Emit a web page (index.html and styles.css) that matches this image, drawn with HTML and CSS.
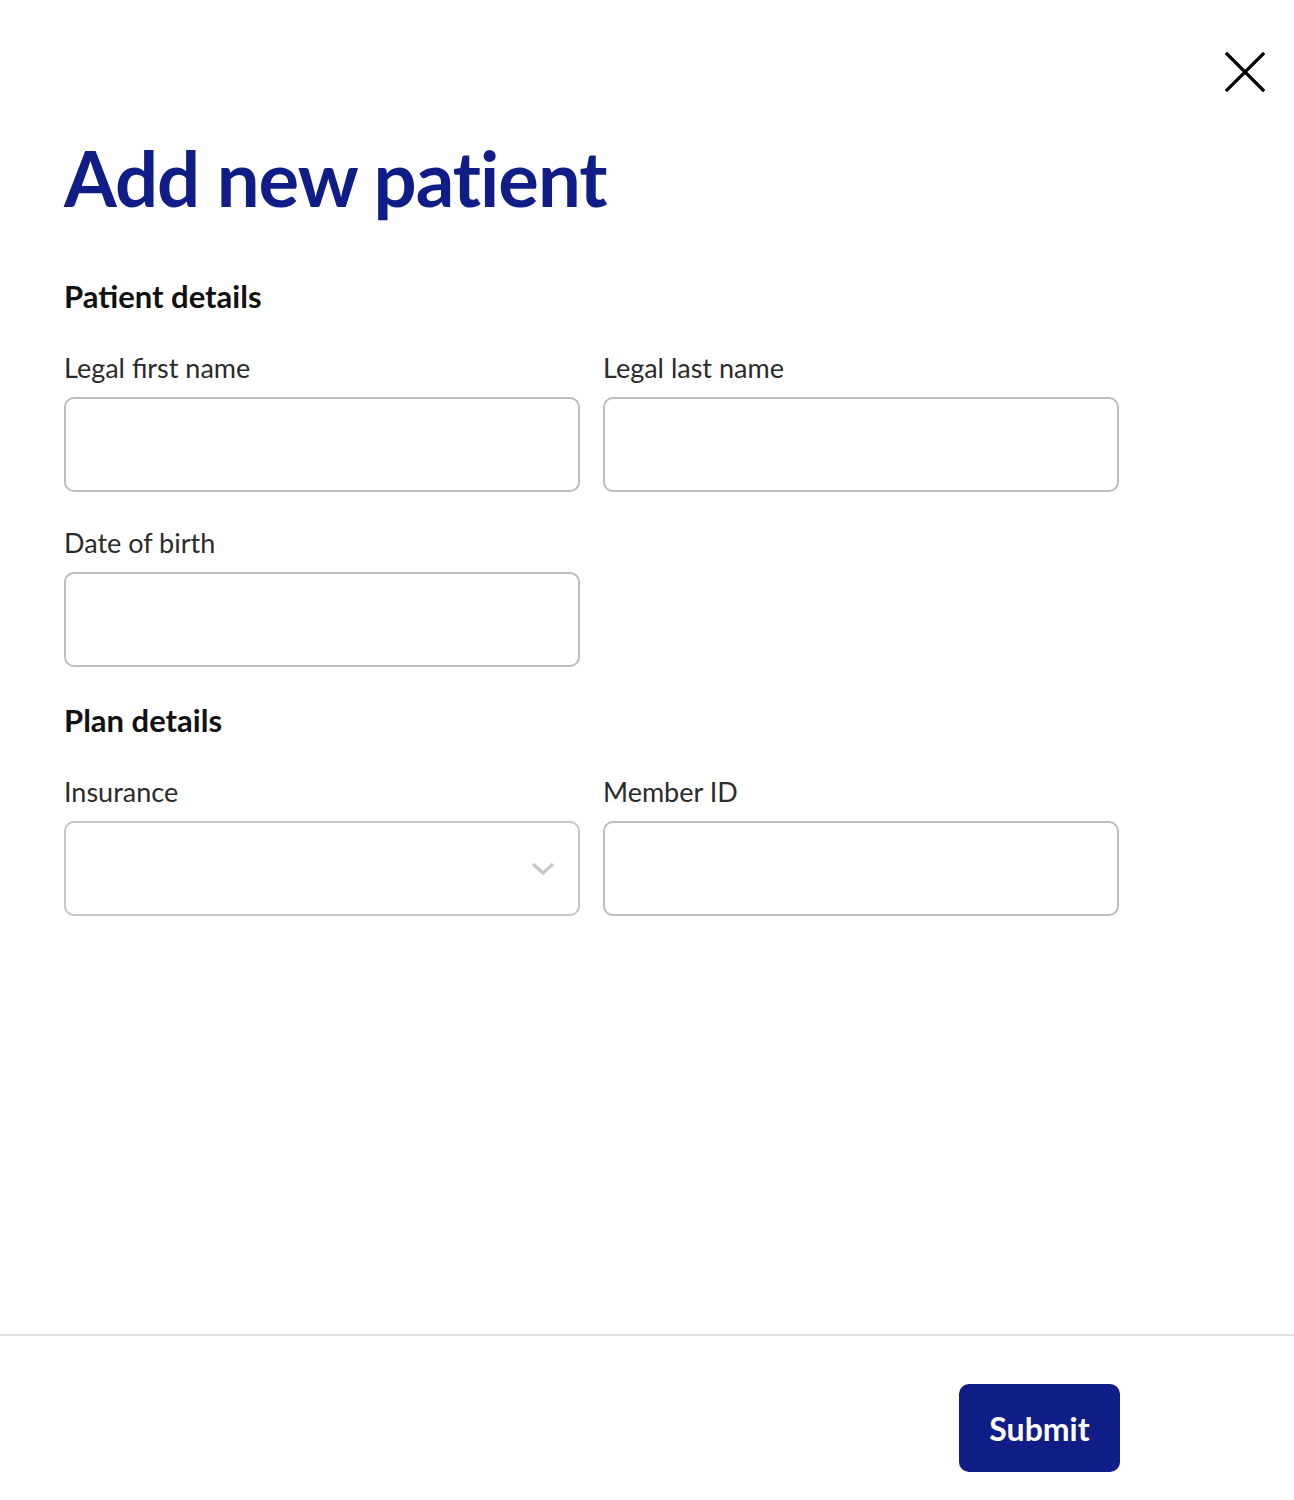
FILE: index.html
```html
<!DOCTYPE html>
<html lang="en">
<head>
    <meta charset="UTF-8">
    <meta name="viewport" content="width=device-width, initial-scale=1.0">
    <title>Add new patient</title>
    <link rel="stylesheet" href="styles.css">
</head>
<body>

<div class="modal">
    <div class="modal-body">
        <!-- close button -->
        <div class="modal-top">
            <button class="close-btn" aria-label="Close">
                <svg width="42" height="42" viewBox="0 0 42 42">
                    <path d="M3 3 L39 39 M39 3 L3 39" stroke="#000" stroke-width="3.2" stroke-linecap="square" fill="none"/>
                </svg>
            </button>
        </div>

        <h1 class="title">Add new patient</h1>

        <form class="patient-form">
            <h2 class="section-title">Patient details</h2>
            <div class="field-grid">
                <div class="field">
                    <label class="field-label">Legal first name</label>
                    <input class="field-input" type="text">
                </div>
                <div class="field">
                    <label class="field-label">Legal last name</label>
                    <input class="field-input" type="text">
                </div>
                <div class="field">
                    <label class="field-label">Date of birth</label>
                    <input class="field-input" type="text">
                </div>
            </div>

            <h2 class="section-title">Plan details</h2>
            <div class="field-grid">
                <div class="field">
                    <label class="field-label">Insurance</label>
                    <div class="select-box">
                        <svg class="chevron" width="26" height="16" viewBox="0 0 26 16">
                            <path d="M3 3 L13 12 L23 3" stroke="#c8c8c8" stroke-width="3.4" fill="none"/>
                        </svg>
                    </div>
                </div>
                <div class="field">
                    <label class="field-label">Member ID</label>
                    <input class="field-input" type="text">
                </div>
            </div>
        </form>
    </div>

    <!-- footer -->
    <div class="modal-footer">
        <button class="submit-btn" type="button">Submit</button>
    </div>
</div>

</body>
</html>
```

FILE: styles.css
```css
* {
    margin: 0;
    padding: 0;
    box-sizing: border-box;
}
body {
    font-family: Lato, "Noto Sans", sans-serif;
    background-color: #fff;
    color: #111;
}
.modal {
    min-height: 1500px;
    display: flex;
    flex-direction: column;
}
.modal-body {
    flex: 1;
    padding: 0 28px 0 64px;
}
.modal-top {
    display: flex;
    justify-content: flex-end;
    padding-top: 51px;
}
.close-btn {
    background: none;
    border: none;
    width: 42px;
    height: 42px;
    cursor: pointer;
}
.close-btn svg {
    display: block;
}
.title {
    font-size: 76px;
    font-weight: 700;
    color: #101d87;
    letter-spacing: -1px;
    line-height: 1;
    margin-top: 47px;
}
.patient-form {
    width: 1055px;
    padding-top: 62px;
}
.section-title {
    font-size: 31px;
    font-weight: 700;
    color: #111;
    line-height: 36px;
    margin-bottom: 38px;
}
.field-grid {
    display: grid;
    grid-template-columns: 516px 516px;
    column-gap: 23px;
    row-gap: 35px;
    margin-bottom: 35px;
}
.field-label {
    display: block;
    font-size: 27px;
    color: #2b2b2b;
    line-height: 32px;
    margin-bottom: 13px;
}
.field-input,
.select-box {
    display: block;
    width: 100%;
    height: 95px;
    border: 2px solid #bdbdbd;
    border-radius: 10px;
    background: #fff;
    font: inherit;
    font-size: 26px;
    padding: 0 20px;
}
.select-box {
    position: relative;
    border-color: #c6c6c6;
}
.chevron {
    position: absolute;
    right: 22px;
    top: 38px;
}
.modal-footer {
    border-top: 2px solid #e2e2e2;
    display: flex;
    justify-content: flex-end;
    padding: 48px 174px 28px 0;
}
.submit-btn {
    background-color: #101d87;
    color: #fff;
    border: none;
    border-radius: 10px;
    width: 161px;
    height: 88px;
    font-family: inherit;
    font-size: 32px;
    font-weight: 700;
    cursor: pointer;
}
```
